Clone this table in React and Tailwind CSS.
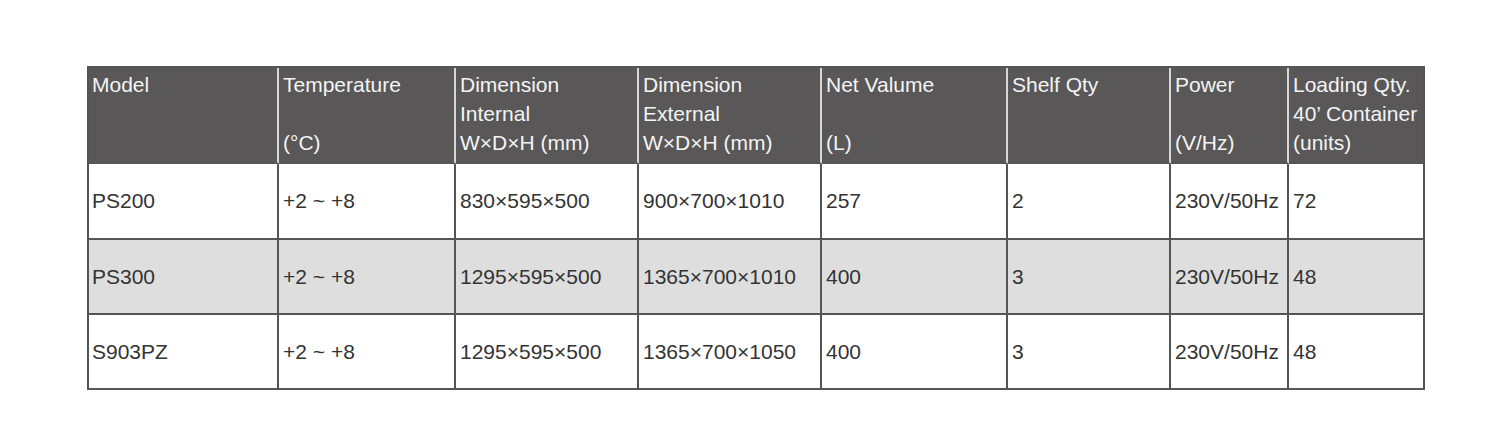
import React from "react";

const headers = [
  ["Model", "", ""],
  ["Temperature", "", "(°C)"],
  ["Dimension", "Internal", "W×D×H (mm)"],
  ["Dimension", "External", "W×D×H (mm)"],
  ["Net Valume", "", "(L)"],
  ["Shelf Qty", "", ""],
  ["Power", "", "(V/Hz)"],
  ["Loading Qty.", "40’ Container", "(units)"],
];

const rows = [
  { h: "h-[76px]", bg: "bg-white", cells: ["PS200", "+2 ~ +8", "830×595×500", "900×700×1010", "257", "2", "230V/50Hz", "72"] },
  { h: "h-[75px]", bg: "bg-[#dedede]", cells: ["PS300", "+2 ~ +8", "1295×595×500", "1365×700×1010", "400", "3", "230V/50Hz", "48"] },
  { h: "h-[75px]", bg: "bg-white", cells: ["S903PZ", "+2 ~ +8", "1295×595×500", "1365×700×1050", "400", "3", "230V/50Hz", "48"] },
];

export default function App() {
  return (
    <div
      className="w-[1512px] h-[427px] bg-white pt-[66px] pl-[87px]"
      style={{ fontFamily: '"Liberation Sans", Arial, sans-serif' }}
    >
      <div className="w-fit border-l-2 border-t-2 border-[#555555]">
        <div className="grid grid-cols-[190px_177px_183px_183px_186px_163px_118px_136px]">
          {headers.map((lines, i) => (
            <div
              key={"h" + i}
              className={`h-[96px] bg-[#595757] border-b-2 border-[#555555] border-r-2 ${
                i === headers.length - 1 ? "border-r-[#555555]" : "border-r-[#d6d6d6]"
              } ${i === 0 ? "pl-[3px]" : "pl-[4px]"} pt-[2px] text-[21px] leading-[29px] text-[#f4f4f4] whitespace-nowrap`}
            >
              {lines.map((l, j) => (
                <div key={j} className="h-[29px]">
                  {l}
                </div>
              ))}
            </div>
          ))}
          {rows.map((r, ri) =>
            r.cells.map((c, ci) => (
              <div
                key={ri + "-" + ci}
                className={`${r.h} ${r.bg} border-b-2 border-r-2 border-[#555555] ${
                  ci === 0 ? "pl-[3px]" : "pl-[4px]"
                } flex items-center text-[21px] text-[#333333] whitespace-nowrap`}
              >
                {c}
              </div>
            ))
          )}
        </div>
      </div>
    </div>
  );
}
